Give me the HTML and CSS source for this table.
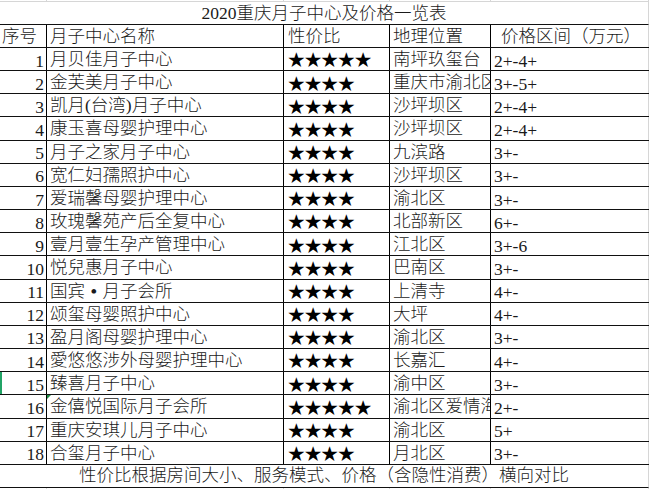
FILE: index.html
```html
<!DOCTYPE html>
<html lang="zh">
<head>
<meta charset="utf-8">
<title>2020重庆月子中心及价格一览表</title>
<link rel="stylesheet" href="styles.css">
</head>
<body>
<div class="sheet">
  <div class="band"><span></span><span></span><span></span><span></span><span></span></div>
  <div class="title">2020重庆月子中心及价格一览表</div>
  <div class="row head">
    <div class="c a h">序号</div>
    <div class="c b">月子中心名称</div>
    <div class="c cc">性价比</div>
    <div class="c d">地理位置</div>
    <div class="c e eh">价格区间（万元）</div>
  </div>
  <div class="row"><div class="c a">1</div><div class="c b">月贝佳月子中心</div><div class="c cc stars">★★★★★</div><div class="c d">南坪玖玺台</div><div class="c e">2+-4+</div></div>
  <div class="row"><div class="c a">2</div><div class="c b">金芙美月子中心</div><div class="c cc stars">★★★★</div><div class="c d">重庆市渝北区</div><div class="c e">3+-5+</div></div>
  <div class="row"><div class="c a">3</div><div class="c b">凯月(台湾)月子中心</div><div class="c cc stars">★★★★</div><div class="c d">沙坪坝区</div><div class="c e">2+-4+</div></div>
  <div class="row"><div class="c a">4</div><div class="c b">康玉喜母婴护理中心</div><div class="c cc stars">★★★★</div><div class="c d">沙坪坝区</div><div class="c e">2+-4+</div></div>
  <div class="row"><div class="c a">5</div><div class="c b">月子之家月子中心</div><div class="c cc stars">★★★★</div><div class="c d">九滨路</div><div class="c e">3+-</div></div>
  <div class="row"><div class="c a">6</div><div class="c b">宽仁妇孺照护中心</div><div class="c cc stars">★★★★</div><div class="c d">沙坪坝区</div><div class="c e">3+-</div></div>
  <div class="row"><div class="c a">7</div><div class="c b">爱瑞馨母婴护理中心</div><div class="c cc stars">★★★★</div><div class="c d">渝北区</div><div class="c e">3+-</div></div>
  <div class="row"><div class="c a">8</div><div class="c b">玫瑰馨苑产后全复中心</div><div class="c cc stars">★★★★</div><div class="c d">北部新区</div><div class="c e">6+-</div></div>
  <div class="row"><div class="c a">9</div><div class="c b">壹月壹生孕产管理中心</div><div class="c cc stars">★★★★</div><div class="c d">江北区</div><div class="c e">3+-6</div></div>
  <div class="row"><div class="c a">10</div><div class="c b">悦兒惠月子中心</div><div class="c cc stars">★★★★</div><div class="c d">巴南区</div><div class="c e">3+-</div></div>
  <div class="row"><div class="c a">11</div><div class="c b">国宾<span class="dot">•</span>月子会所</div><div class="c cc stars">★★★★</div><div class="c d">上清寺</div><div class="c e">4+-</div></div>
  <div class="row"><div class="c a">12</div><div class="c b">颂玺母婴照护中心</div><div class="c cc stars">★★★★</div><div class="c d">大坪</div><div class="c e">4+-</div></div>
  <div class="row"><div class="c a">13</div><div class="c b">盈月阁母婴护理中心</div><div class="c cc stars">★★★★</div><div class="c d">渝北区</div><div class="c e">3+-</div></div>
  <div class="row"><div class="c a">14</div><div class="c b">愛悠悠涉外母婴护理中心</div><div class="c cc stars">★★★★</div><div class="c d">长嘉汇</div><div class="c e">4+-</div></div>
  <div class="row sel"><div class="c a">15</div><div class="c b">臻喜月子中心</div><div class="c cc stars">★★★★</div><div class="c d">渝中区</div><div class="c e">3+-</div></div>
  <div class="row"><div class="c a">16</div><div class="c b flag">金僖悦国际月子会所</div><div class="c cc stars">★★★★★</div><div class="c d">渝北区爱情海</div><div class="c e">2+-</div></div>
  <div class="row"><div class="c a">17</div><div class="c b">重庆安琪儿月子中心</div><div class="c cc stars">★★★★</div><div class="c d">渝北区</div><div class="c e">5+</div></div>
  <div class="row"><div class="c a">18</div><div class="c b">合玺月子中心</div><div class="c cc stars">★★★★</div><div class="c d">月北区</div><div class="c e">3+-</div></div>
  <div class="footer">性价比根据房间大小、服务模式、价格（含隐性消费）横向对比</div>
  <div class="band bottom"><span></span><span></span><span></span><span></span><span></span></div>
</div>
</body>
</html>
```
FILE: styles.css
```css
html, body {
  margin: 0;
  padding: 0;
  background: #fff;
}

.sheet {
  width: 650px;
  font-family: "Liberation Serif", "Noto Sans CJK SC", serif;
  font-size: 17.5px;
  font-weight: 300;
  color: #1a1a1a;
  overflow: hidden;
}

.band {
  display: grid;
  grid-template-columns: 47px 237px 106px 101px 158px;
  height: 2px;
  box-sizing: border-box;
  border-bottom: 1px solid #d6d6d6;
  width: 649px;
}

.band span {
  border-right: 1px solid #d6d6d6;
}

.band.bottom {
  border-bottom: none;
  height: 2px;
}

.title,
.footer {
  height: 23px;
  box-sizing: border-box;
  width: 649px;
  border-bottom: 1px solid #111;
  border-right: 1px solid #d6d6d6;
  text-align: center;
  line-height: 20px;
  white-space: nowrap;
}

.title {
  padding-top: 1px;
}

.footer {
  padding-top: 0;
}

.row {
  display: grid;
  grid-template-columns: 47px 237px 106px 101px 158px;
  height: 23.17px;
  box-sizing: border-box;
  border-bottom: 1px solid #111;
  width: 649px;
}

.row.head {
  height: 23px;
}

.c {
  border-right: 1px solid #000;
  overflow: hidden;
  white-space: nowrap;
  line-height: 20px;
  padding: 1px 0 0 3px;
  position: relative;
}

.c.a {
  text-align: right;
  padding: 2.6px 2px 0 0;
}

.c.a.h {
  text-align: left;
  padding: 1px 0 0 2px;
}

.c.cc {
  padding-left: 4px;
}

.c.stars {
  font-family: "Noto Sans CJK SC", sans-serif;
  font-size: 16.7px;
  font-weight: normal;
  color: #000;
  padding-top: 1.4px;
}

.c.e {
  border-right: 1px solid #d6d6d6;
  padding-top: 2.6px;
}

.c.e.eh {
  padding: 1px 0 0 10px;
}

.dot {
  display: inline-block;
  width: 1em;
  text-align: center;
  font-weight: bold;
}

.row.sel {
  box-shadow: inset 2px 0 0 #21a366;
}

.flag::before {
  content: "";
  position: absolute;
  left: 0;
  top: 0;
  border-top: 4px solid #1e8c45;
  border-right: 4px solid transparent;
}
```
